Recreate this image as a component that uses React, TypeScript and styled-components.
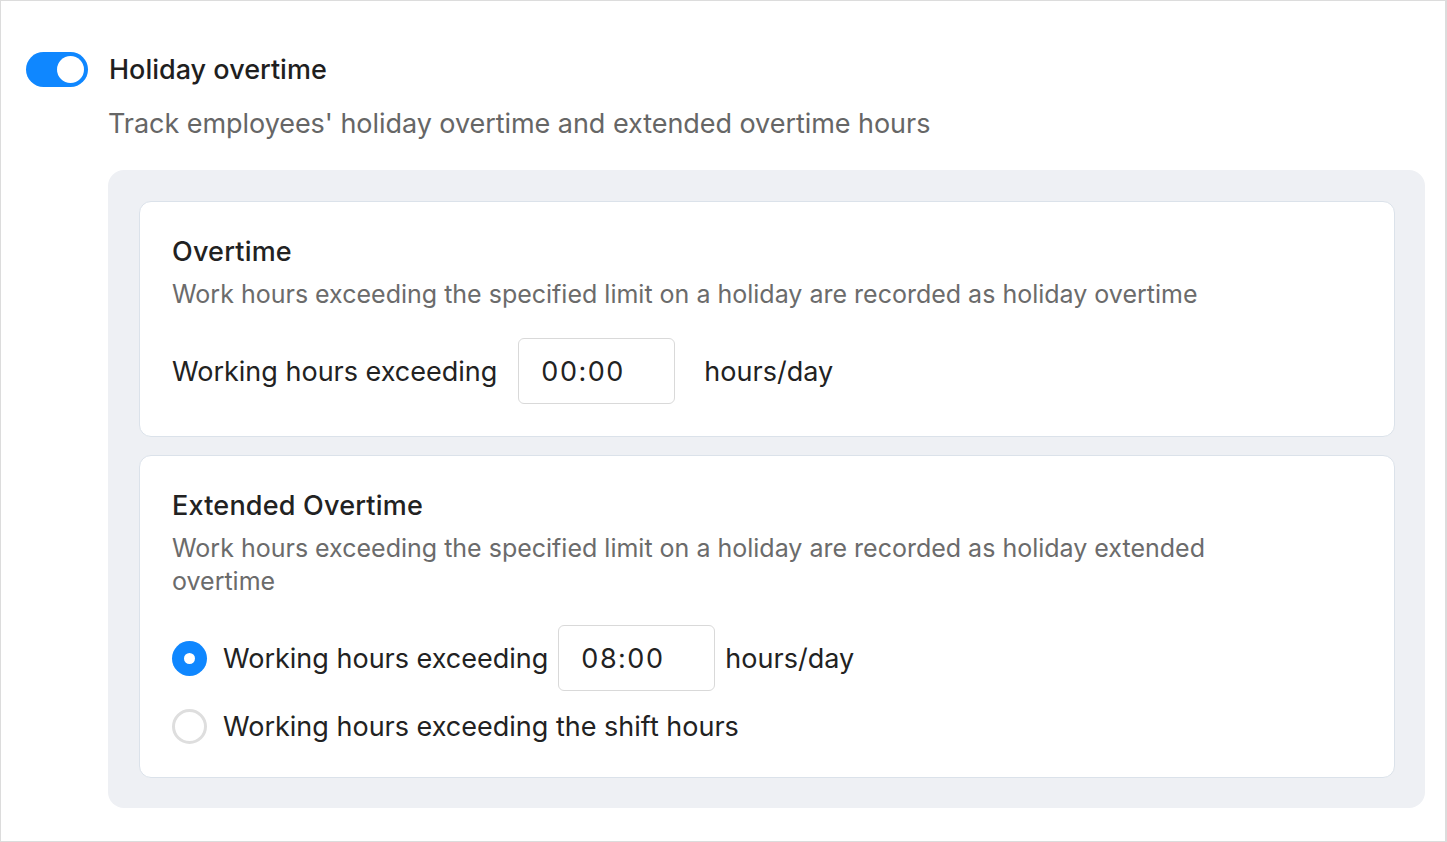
import styled, { createGlobalStyle } from 'styled-components';

const GlobalStyle = createGlobalStyle`
  * { box-sizing: border-box; }
  html, body { margin: 0; padding: 0; background: #ffffff; }
  body {
    font-family: 'Inter', 'Noto Sans', sans-serif;
    color: #222222;
    -webkit-font-smoothing: antialiased;
  }
`;

const Page = styled.div`
  width: 1447px;
  height: 842px;
  border: 1px solid #dcdcdc;
  border-right-width: 2px;
  padding: 50px 20px 0 25px;
`;

const Header = styled.div`
  display: flex;
  align-items: center;
  gap: 21px;
  height: 36px;
`;

const Toggle = styled.div<{ $on: boolean }>`
  width: 62px;
  height: 35px;
  border-radius: 18px;
  background: ${(p) => (p.$on ? '#0f87ff' : '#cfd4da')};
  display: flex;
  align-items: center;
  justify-content: ${(p) => (p.$on ? 'flex-end' : 'flex-start')};
  padding: 0 4px;
  flex-shrink: 0;
`;

const Knob = styled.span`
  width: 27px;
  height: 27px;
  border-radius: 50%;
  background: #ffffff;
`;

const Title = styled.h1`
  margin: 0;
  font-size: 27px;
  font-weight: 500;
  color: #1f1f1f;
`;

const Body = styled.div`
  padding-left: 82px;
`;

const Subtitle = styled.p`
  margin: 19px 0 0;
  height: 64px;
  font-size: 27px;
  line-height: 36px;
  letter-spacing: -0.05px;
  color: #666666;
`;

const Panel = styled.div`
  background: #eef0f4;
  border-radius: 16px;
  padding: 31px 30px 30px 31px;
  display: flex;
  flex-direction: column;
  gap: 18px;
`;

const Card = styled.section`
  background: #ffffff;
  border: 1px solid #dbe2ea;
  border-radius: 12px;
  padding: 34px 32px 32px;
`;

const CardTitle = styled.h2`
  margin: 0;
  font-size: 27px;
  font-weight: 500;
  letter-spacing: 0.2px;
  color: #222222;
  line-height: 32px;
`;

const Description = styled.p`
  margin: 10px 0 0;
  max-width: 1100px;
  font-size: 25px;
  line-height: 33px;
  color: #6b6b6b;
`;

const Row = styled.div<{ $gap: number }>`
  display: flex;
  align-items: center;
  gap: ${(p) => p.$gap}px;
  font-size: 27px;
  color: #222222;
`;

const FieldRow = styled(Row)`
  margin-top: 27px;
`;

const TimeBox = styled.div`
  width: 157px;
  height: 66px;
  border: 1px solid #d9d9d9;
  border-radius: 6px;
  display: flex;
  align-items: center;
  padding-left: 22px;
  font-size: 27px;
  color: #222222;
  letter-spacing: 1.5px;
`;

const Options = styled.div`
  margin-top: 27px;
  display: flex;
  flex-direction: column;
  gap: 15px;
`;

const OptionRow = styled(Row)`
  min-height: 40px;
`;

const Radio = styled.span<{ $checked: boolean }>`
  width: 35px;
  height: 35px;
  border-radius: 50%;
  flex-shrink: 0;
  margin-right: 6px;
  background: ${(p) => (p.$checked ? '#0f87ff' : '#ffffff')};
  border: ${(p) => (p.$checked ? 'none' : '3px solid #dedede')};
  display: flex;
  align-items: center;
  justify-content: center;
  &::after {
    content: '';
    width: 11px;
    height: 11px;
    border-radius: 50%;
    background: #ffffff;
    display: ${(p) => (p.$checked ? 'block' : 'none')};
  }
`;

const ExtendedCard = styled(Card)`
  padding-bottom: 31px;
`;

export default function App() {
  return (
    <>
      <GlobalStyle />
      <Page>
        <Header>
          <Toggle $on>
            <Knob />
          </Toggle>
          <Title>Holiday overtime</Title>
        </Header>
        <Body>
          <Subtitle>Track employees' holiday overtime and extended overtime hours</Subtitle>
          <Panel>
            <Card>
              <CardTitle>Overtime</CardTitle>
              <Description>
                Work hours exceeding the specified limit on a holiday are recorded as holiday overtime
              </Description>
              <FieldRow $gap={21}>
                <span>Working hours exceeding</span>
                <TimeBox>00:00</TimeBox>
                <span style={{ marginLeft: 8 }}>hours/day</span>
              </FieldRow>
            </Card>
            <ExtendedCard>
              <CardTitle>Extended Overtime</CardTitle>
              <Description>
                Work hours exceeding the specified limit on a holiday are recorded as holiday extended overtime
              </Description>
              <Options>
                <OptionRow $gap={10}>
                  <Radio $checked />
                  <span>Working hours exceeding</span>
                  <TimeBox>08:00</TimeBox>
                  <span>hours/day</span>
                </OptionRow>
                <OptionRow $gap={10}>
                  <Radio $checked={false} />
                  <span>Working hours exceeding the shift hours</span>
                </OptionRow>
              </Options>
            </ExtendedCard>
          </Panel>
        </Body>
      </Page>
    </>
  );
}
